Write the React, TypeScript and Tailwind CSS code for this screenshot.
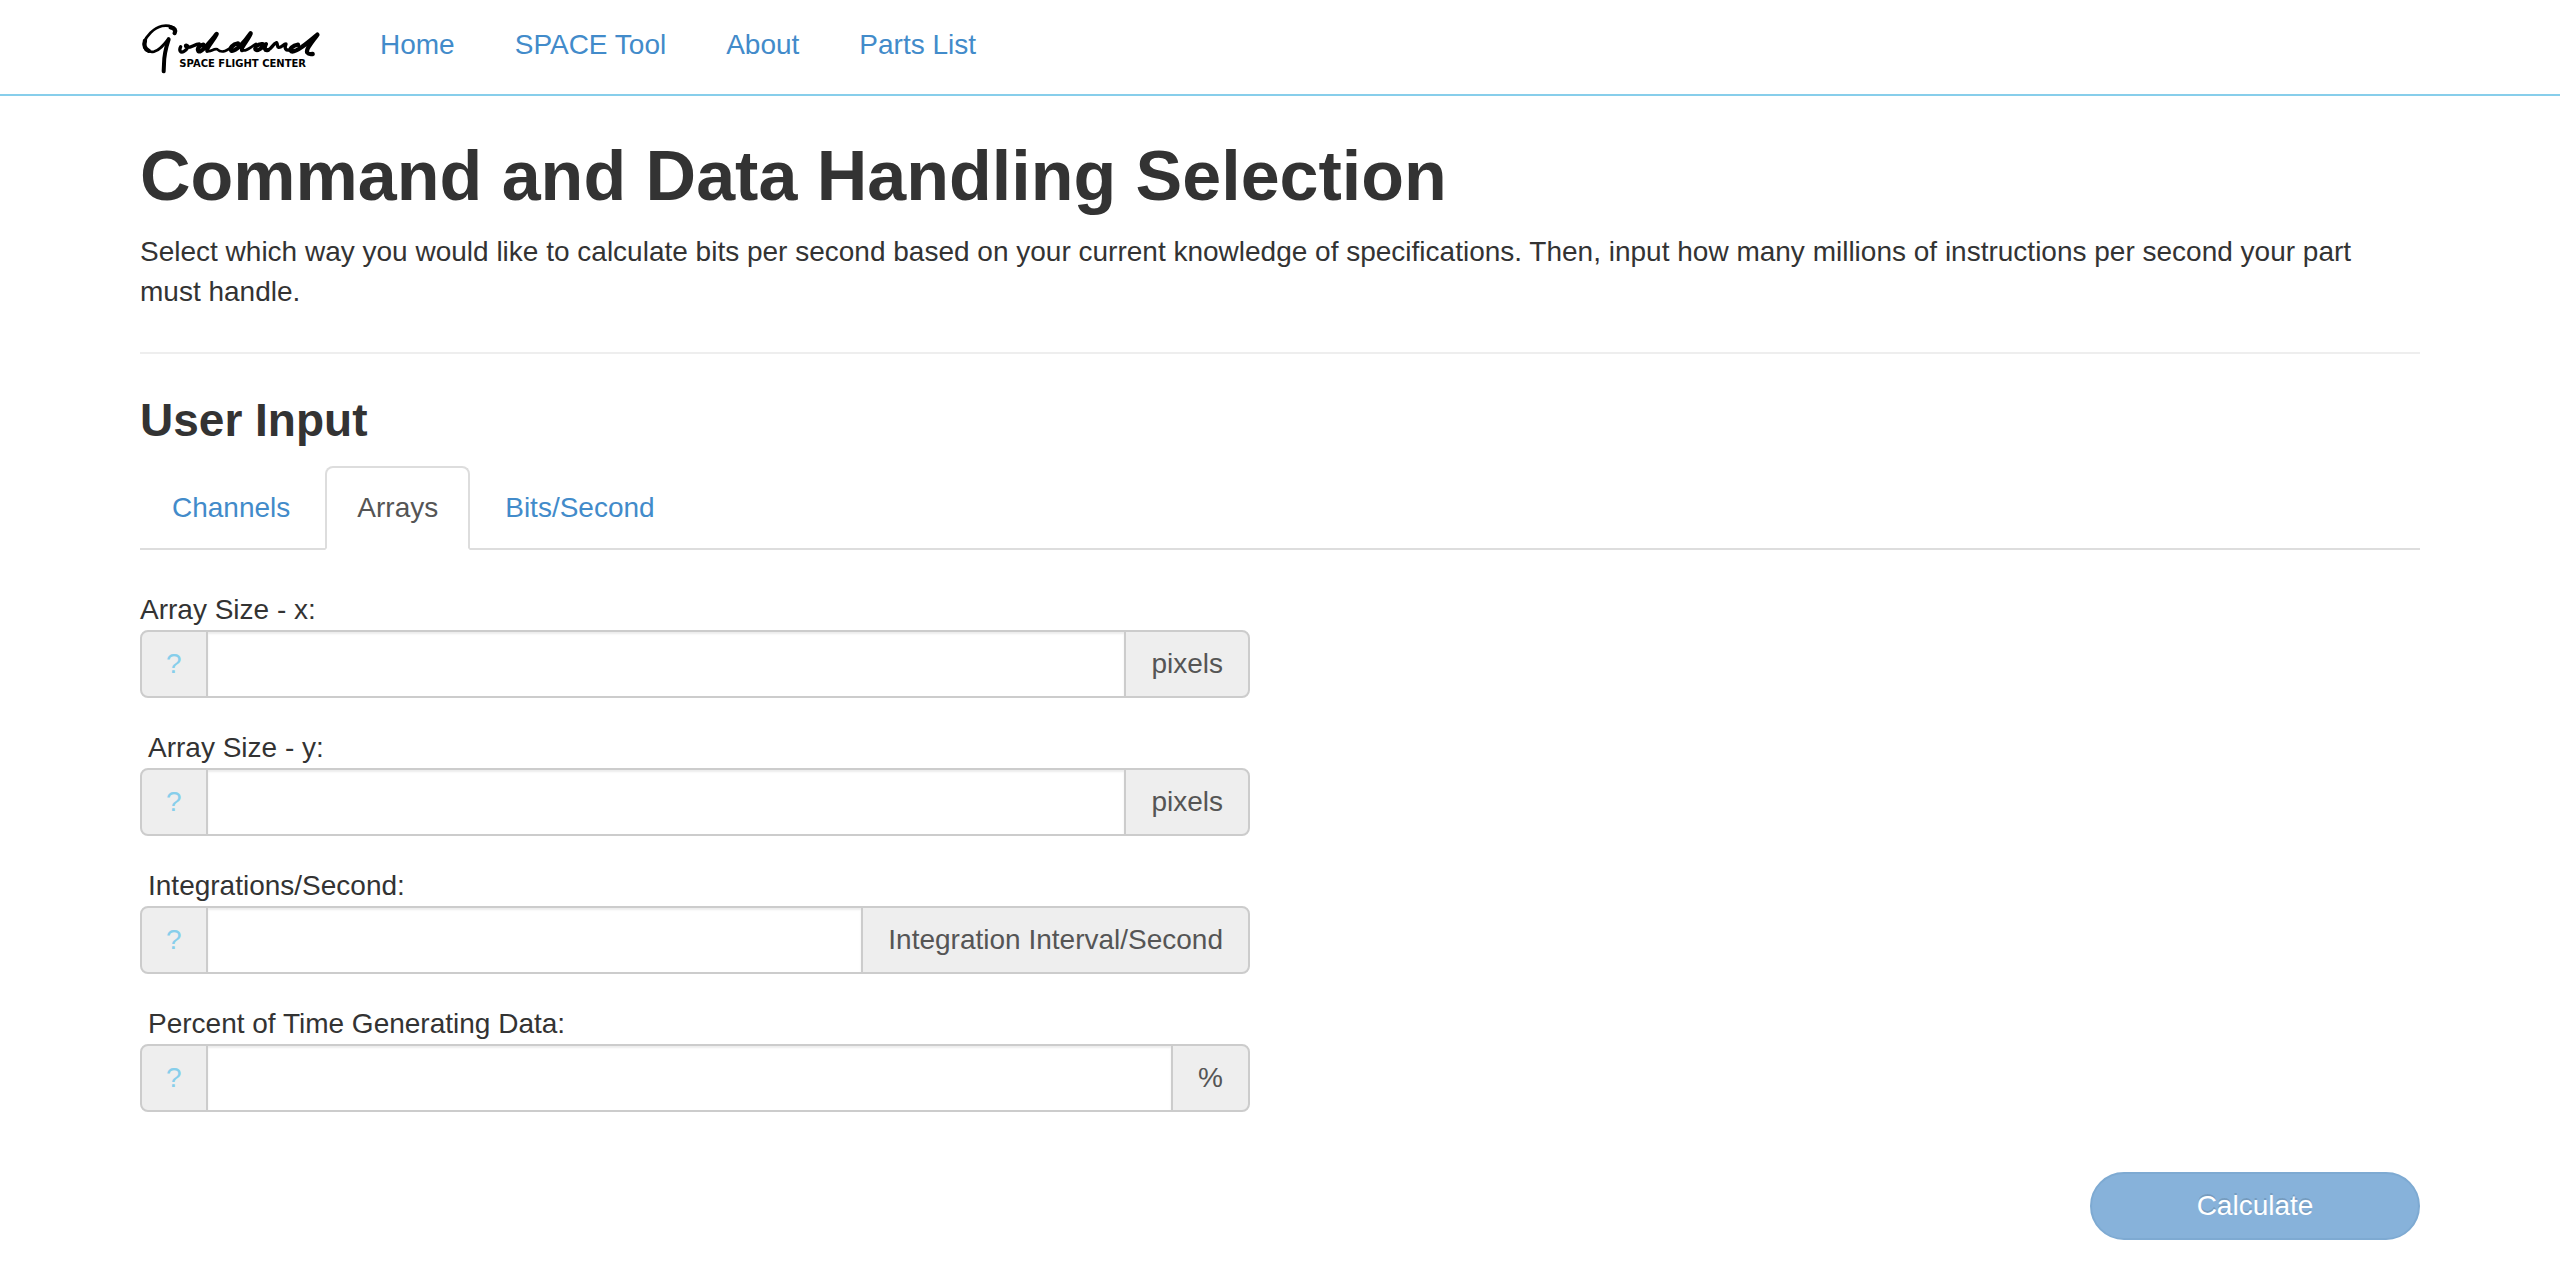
const navLinks = ["Home", "SPACE Tool", "About", "Parts List"];

const tabs = [
  { name: "Channels", active: false },
  { name: "Arrays", active: true },
  { name: "Bits/Second", active: false },
];

const fields = [
  { id: "array-x", label: "Array Size - x:", unit: "pixels", indent: false },
  { id: "array-y", label: "Array Size - y:", unit: "pixels", indent: true },
  { id: "integrations", label: "Integrations/Second:", unit: "Integration Interval/Second", indent: true },
  { id: "percent", label: "Percent of Time Generating Data:", unit: "%", indent: true },
];

function Logo() {
  return (
    <svg viewBox="0 0 540 156" className="h-[52px] w-[180px]" role="img" aria-label="Goddard Space Flight Center">
      <g fill="none" stroke="#000" strokeLinecap="round" strokeLinejoin="round">
        {/* G */}
        <path strokeWidth="8" d="M104 28 C110 10 88 2 66 6 C40 12 18 38 13 54 C8 74 22 86 42 83 C58 80 72 62 86 44" />
        <path strokeWidth="13" d="M92 10 C104 12 108 20 104 27 M15 50 C11 64 15 76 26 80" />
        <path strokeWidth="12" d="M86 46 C76 76 72 104 72 120 L71 142" />
        {/* o */}
        <path strokeWidth="10" d="M122 68 C116 80 122 88 132 82 C142 76 148 66 140 64 C136 62 134 68 142 70 C152 72 164 60 178 60" />
        {/* d */}
        <path strokeWidth="13" d="M190 62 C178 64 170 74 176 82 C184 86 208 56 230 30 C220 50 198 72 202 80" />
        <path strokeWidth="8" d="M202 80 C212 86 220 72 232 76 C246 90 262 80 286 60" />
        {/* d */}
        <path strokeWidth="13" d="M294 58 C278 60 268 74 274 80 C286 84 314 54 332 28 C324 48 302 70 306 78" />
        <path strokeWidth="8" d="M306 78 C318 84 330 70 348 60" />
        {/* a, r */}
        <path strokeWidth="12" d="M368 60 C352 58 340 74 348 78 C358 82 370 66 378 60 C372 74 374 80 384 78" />
        <path strokeWidth="10" d="M384 78 C394 76 398 60 410 56 C414 62 410 68 416 70 C424 72 430 60 438 60 C432 74 438 80 448 78" />
        {/* d */}
        <path strokeWidth="13" d="M474 62 C458 64 446 76 454 82 C468 87 506 54 532 32 C518 52 496 76 502 86 C506 92 512 91 518 90" />
      </g>
      <text x="118" y="128" fontSize="30" fontWeight="700" fontFamily="DejaVu Sans, sans-serif" fill="#000">
        SPACE FLIGHT CENTER
      </text>
    </svg>
  );
}

function Field({ id, label, unit, indent }: { id: string; label: string; unit: string; indent: boolean }) {
  return (
    <div>
      <label htmlFor={id} className={indent ? "block pl-2" : "block"}>
        {label}
      </label>
      <div className="flex h-[68px] overflow-hidden rounded-lg border-2 border-[#cccccc] bg-[#eeeeee]">
        <button type="button" aria-label={"Help: " + label} className="border-r-2 border-[#cccccc] px-6 text-[#87ceeb]">
          ?
        </button>
        <input
          id={id}
          type="text"
          className="min-w-0 flex-1 bg-white px-6 shadow-[inset_0_2px_2px_rgba(0,0,0,0.075)] outline-none"
        />
        <span className="flex items-center border-l-2 border-[#cccccc] px-[25px] text-[#555555]">{unit}</span>
      </div>
    </div>
  );
}

export default function App() {
  return (
    <div className="min-h-screen bg-white font-['Liberation_Sans',Arial,sans-serif] text-[28px] leading-10 text-[#333333]">
      <header className="border-b-2 border-[#87ceeb]">
        <div className="mx-auto flex h-[94px] max-w-[2280px] items-start">
          <a href="#" className="mt-6 w-[240px]">
            <Logo />
          </a>
          <nav className="mt-[25px] flex gap-[60px] text-[#428bca]">
            {navLinks.map((link) => (
              <a key={link} href="#">
                {link}
              </a>
            ))}
          </nav>
        </div>
      </header>

      <main className="mx-auto max-w-[2280px] pt-10">
        <h1 className="text-[70px] leading-[80px] font-bold">Command and Data Handling Selection</h1>
        <p className="mt-4 pr-8">
          Select which way you would like to calculate bits per second based on your current knowledge of
          specifications. Then, input how many millions of instructions per second your part must handle.
        </p>
        <hr className="mt-10 border-t-2 border-[#eeeeee]" />
        <h2 className="mt-10 text-[46px] leading-[52px] font-bold">User Input</h2>

        <div role="tablist" className="mt-5 flex gap-[3px] border-b-2 border-[#dddddd]">
          {tabs.map((tab) => (
            <button
              key={tab.name}
              type="button"
              role="tab"
              aria-selected={tab.active}
              className={
                tab.active
                  ? "-mb-[2px] rounded-t-lg border-2 border-[#dddddd] border-b-white px-[30px] py-5 text-[#555555]"
                  : "border-x-2 border-t-2 border-transparent px-[30px] py-5 text-[#428bca]"
              }
            >
              {tab.name}
            </button>
          ))}
        </div>

        <form>
          <div className="mt-10 flex w-[1110px] max-w-full flex-col gap-[30px]">
            {fields.map((field) => (
              <Field key={field.id} {...field} />
            ))}
          </div>
          <div className="mt-[60px] flex justify-end pb-8">
            <button
              type="submit"
              disabled
              className="h-[68px] w-[330px] rounded-full border-2 border-[#7eaad2] bg-[#87b2da] text-white [text-shadow:0_-2px_0_rgba(0,0,0,0.12)]"
            >
              Calculate
            </button>
          </div>
        </form>
      </main>
    </div>
  );
}
